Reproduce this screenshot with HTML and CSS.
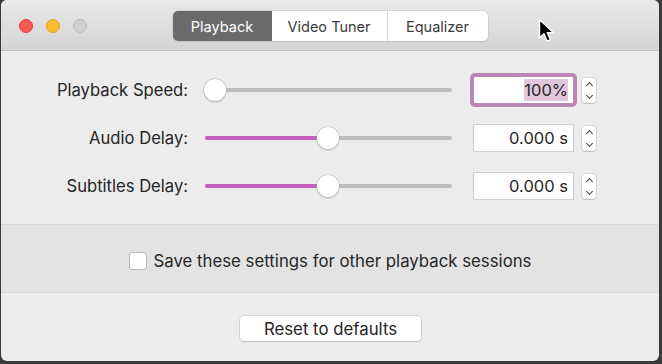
FILE: index.html
```html
<!DOCTYPE html>
<html lang="en">
<head>
  <meta charset="UTF-8" />
  <title>Playback Settings</title>
  <link rel="stylesheet" href="styles.css">
</head>
<body>

<div class="window">
  <div class="titlebar">
    <div class="lights">
      <span class="light red"></span>
      <span class="light yellow"></span>
      <span class="light gray"></span>
    </div>
    <div class="tabs">
      <span class="tab active">Playback</span>
      <span class="tab">Video Tuner</span>
      <span class="tab tab-last">Equalizer</span>
    </div>
  </div>

  <div class="controls">
    <div class="row">
      <label class="label">Playback Speed:</label>
      <div class="slider">
        <div class="fill" style="width: 10px;"></div>
        <div class="knob" style="left: -1px;"></div>
      </div>
      <div class="field focused"><span class="selected">100%</span></div>
      <div class="stepper"><span class="up"></span><span class="down"></span></div>
    </div>
    <div class="row">
      <label class="label">Audio Delay:</label>
      <div class="slider">
        <div class="fill" style="width: 123px;"></div>
        <div class="knob" style="left: 112px;"></div>
      </div>
      <div class="field">0.000 s</div>
      <div class="stepper"><span class="up"></span><span class="down"></span></div>
    </div>
    <div class="row">
      <label class="label">Subtitles Delay:</label>
      <div class="slider">
        <div class="fill" style="width: 123px;"></div>
        <div class="knob" style="left: 112px;"></div>
      </div>
      <div class="field">0.000 s</div>
      <div class="stepper"><span class="up"></span><span class="down"></span></div>
    </div>
  </div>

  <div class="band">
    <label class="check"><span class="box"></span>Save these settings for other playback sessions</label>
  </div>

  <div class="footer">
    <button class="button">Reset to defaults</button>
  </div>
</div>

<svg class="cursor" width="18" height="26" viewBox="0 0 18 26">
  <path d="M1.5 1.5 L1.5 20 L6 15.8 L9.2 23.2 L12.4 21.8 L9.3 14.6 L15.2 14.6 Z" fill="#000" stroke="#fff" stroke-width="1.4" stroke-linejoin="round"/>
</svg>

</body>
</html>
```

FILE: styles.css
```css
body {
  margin: 0;
  background: #3a3a3a;
  font-family: Inter, "Noto Sans", sans-serif;
  color: #262626;
  width: 662px;
  height: 364px;
  overflow: hidden;
}
.window {
  margin-left: 1px;
  width: 658px;
  height: 361px;
  background: #ececec;
  border-radius: 6px;
  overflow: hidden;
  display: flex;
  flex-direction: column;
}
.titlebar {
  height: 50px;
  flex: none;
  background: linear-gradient(#e9e9e9, #d4d4d4);
  border-bottom: 1px solid #bdbdbd;
  display: flex;
  align-items: center;
  justify-content: center;
  position: relative;
}
.lights {
  position: absolute;
  left: 18px;
  top: 19px;
  display: flex;
  gap: 13px;
}
.light {
  width: 14px;
  height: 14px;
  border-radius: 50%;
  display: block;
  box-sizing: border-box;
}
.red { background: #fc5753; border: 1px solid #df3d38; }
.yellow { background: #fdbc2f; border: 1px solid #de9f25; }
.gray { background: #d0d0d0; border: 1px solid #bdbdbd; }
.tabs {
  display: flex;
  height: 30px;
  margin-top: 2px;
  background: #fff;
  border-radius: 5px;
  box-shadow: 0 0 0 0.5px #c4c4c4, 0 1px 1px rgba(0,0,0,0.12);
  font-size: 14.5px;
}
.tab {
  display: flex;
  align-items: center;
  justify-content: center;
  box-sizing: border-box;
  white-space: nowrap;
  color: #3b3b3b;
  border-right: 1px solid #dadada;
}
.tab:nth-child(1) { width: 99px; }
.tab:nth-child(2) { width: 116px; }
.tab-last { width: 100px; border-right: none; }
.tab.active {
  background: #6a6a6a;
  color: #fff;
  border-radius: 5px 0 0 5px;
  border-right: none;
}
.controls {
  height: 174px;
  flex: none;
  padding-top: 15px;
  box-sizing: border-box;
  border-bottom: 1px solid #d8d8d8;
}
.row {
  height: 48px;
  display: flex;
  align-items: center;
}
.label {
  width: 187px;
  text-align: right;
  font-size: 16.6px;
  margin-right: 17px;
}
.slider {
  width: 247px;
  height: 4px;
  background: #bdbdbd;
  border-radius: 2px;
  position: relative;
  margin-right: 21px;
}
.fill {
  height: 4px;
  background: #c25fba;
  border-radius: 2px;
}
.knob {
  position: absolute;
  top: -9px;
  width: 22px;
  height: 22px;
  border-radius: 50%;
  background: #fff;
  box-shadow: 0 0 0 0.5px #b3b3b3, 0 1px 2px rgba(0,0,0,0.25);
}
.field {
  width: 101px;
  height: 28px;
  box-sizing: border-box;
  background: #fff;
  border: 1px solid #cfcfcf;
  font-size: 16.5px;
  text-align: right;
  padding: 3px 5px 0 0;
  margin-right: 8px;
}
.field.focused {
  border-color: #b98ab5;
  box-shadow: 0 0 0 3px #ba86b6;
  border-radius: 2px;
}
.selected {
  background: #e2c5df;
  padding: 1px 0;
}
.stepper {
  width: 14px;
  height: 25px;
  background: #fff;
  border-radius: 4px;
  box-shadow: 0 0 0 0.5px #b8b8b8, 0 1px 1px rgba(0,0,0,0.15);
  display: flex;
  flex-direction: column;
  align-items: center;
  justify-content: center;
  gap: 5px;
}
.up, .down {
  width: 4px;
  height: 4px;
  border-left: 1.5px solid #444;
  border-top: 1.5px solid #444;
}
.up { transform: rotate(45deg); margin-top: 3px; }
.down { transform: rotate(-135deg); margin-bottom: 3px; }
.band {
  height: 68px;
  flex: none;
  background: #e3e3e3;
  border-bottom: 1px solid #d8d8d8;
  display: flex;
  align-items: center;
  justify-content: center;
  padding-top: 5px;
  box-sizing: border-box;
}
.check {
  display: flex;
  align-items: center;
  font-size: 16.8px;
}
.box {
  width: 16px;
  height: 16px;
  background: #fff;
  border: 1px solid #b8b8b8;
  border-radius: 3px;
  margin-right: 7px;
}
.footer {
  flex: 1;
  display: flex;
  justify-content: center;
  padding-top: 23px;
}
.button {
  width: 181px;
  height: 25px;
  background: #fff;
  border: none;
  border-radius: 4px;
  box-shadow: 0 0 0 0.5px #bcbcbc, 0 1px 1px rgba(0,0,0,0.15);
  font-family: Inter, "Noto Sans", sans-serif;
  font-size: 16.8px;
  color: #262626;
  margin-left: 1px;
}
.cursor {
  position: absolute;
  left: 538px;
  top: 18px;
}
```
